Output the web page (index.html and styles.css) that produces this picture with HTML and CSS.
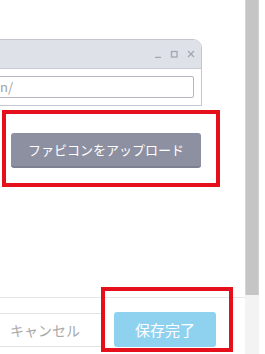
FILE: index.html
```html
<!DOCTYPE html>
<html>
<head>
  <title>ファビコン設定</title>
  <link rel="stylesheet" href="styles.css">
</head>
<body>
  <div class="page">
    <div class="main">
      <div class="window">
        <div class="titlebar">
          <svg class="win-controls" width="41" height="8" viewBox="0 0 41 8">
            <line x1="1" y1="7.5" x2="7" y2="7.5" />
            <rect x="17.5" y="1.5" width="5.5" height="5.5" />
            <line x1="34" y1="1" x2="40" y2="7" />
            <line x1="40" y1="1" x2="34" y2="7" />
          </svg>
        </div>
        <div class="window-body">
          <div class="url-field">n/</div>
        </div>
      </div>

      <div class="mark upload-mark">
        <button class="upload-btn">ファビコンをアップロード</button>
      </div>

      <div class="spacer"></div>

      <div class="footer">
        <button class="cancel-btn">キャンセル</button>
        <button class="save-btn">保存完了</button>
        <div class="mark save-mark"></div>
      </div>
    </div>

    <div class="scrollbar">
      <div class="thumb"></div>
      <div class="track"></div>
    </div>
  </div>
</body>
</html>
```

FILE: styles.css
```css
body {
  margin: 0;
  background: #fff;
  font-family: "Noto Sans CJK JP", "Noto Sans", sans-serif;
  overflow: hidden;
}

.page {
  display: flex;
  width: 265px;
  height: 354px;
}

.main {
  position: relative;
  display: flex;
  flex-direction: column;
  width: 245px;
  height: 354px;
  padding-top: 39px;
  box-sizing: border-box;
  overflow: hidden;
  flex: none;
}

/* browser window mockup */
.window {
  flex: none;
  width: 260px;
  margin-left: -60px;
  border: 1px solid #c3c6cf;
  border-radius: 0 9px 0 0;
  overflow: hidden;
  background: #fff;
}

.titlebar {
  height: 28px;
  background: #dfe1e9;
  border-bottom: 1px solid #c8cbd4;
  display: flex;
  justify-content: flex-end;
  align-items: center;
  padding-right: 6px;
}

.win-controls line,
.win-controls rect {
  stroke: #a3a6b0;
  stroke-width: 1.3;
  fill: none;
}

.window-body {
  padding: 7px 7px 7px 8px;
}

.url-field {
  height: 22px;
  box-sizing: border-box;
  border: 1px solid #b4b7c0;
  border-radius: 2px;
  padding-left: 50px;
  font-size: 13px;
  line-height: 20px;
  color: #a0a0a0;
  white-space: nowrap;
  overflow: hidden;
}

/* red annotation boxes */
.mark {
  border: 4px solid #e5101c;
  box-sizing: border-box;
}

.upload-mark {
  flex: none;
  width: 218px;
  margin: 4px 0 0 2px;
  padding: 19px 15px 15px 5px;
}

.upload-btn {
  display: block;
  width: 190px;
  height: 35px;
  border: none;
  border-bottom: 2px solid #7d8090;
  border-radius: 3px;
  background: #8d90a1;
  color: #fff;
  font-family: inherit;
  font-size: 13px;
  padding: 0;
}

.spacer {
  flex: 1;
}

.footer {
  position: relative;
  flex: none;
  height: 57px;
  box-sizing: border-box;
  border-top: 1px solid #e6e6e6;
  padding-top: 14px;
  display: flex;
  align-items: flex-start;
  gap: 10px;
}

.cancel-btn {
  width: 118px;
  height: 34px;
  margin: 1px 0 0 -14px;
  border: 1px solid #e2e2e2;
  border-radius: 2px;
  background: #fff;
  color: #a8a8a8;
  font-family: inherit;
  font-size: 14px;
  padding: 0;
}

.save-btn {
  width: 102px;
  height: 35px;
  border: none;
  border-radius: 3px;
  background: #8fd2ef;
  color: #fff;
  font-family: inherit;
  font-size: 15px;
  padding: 0;
}

.save-mark {
  position: absolute;
  left: 101px;
  top: -11px;
  width: 132px;
  height: 65px;
}

.scrollbar {
  display: flex;
  flex-direction: column;
  width: 14px;
  height: 354px;
  flex: none;
}

.thumb {
  height: 295px;
  background: #c5c5c5;
  border-left: 1px solid #d6d6d6;
  border-right: 1px solid #d0d0d0;
}

.track {
  flex: 1;
  background: #f3f3f3;
}
```
